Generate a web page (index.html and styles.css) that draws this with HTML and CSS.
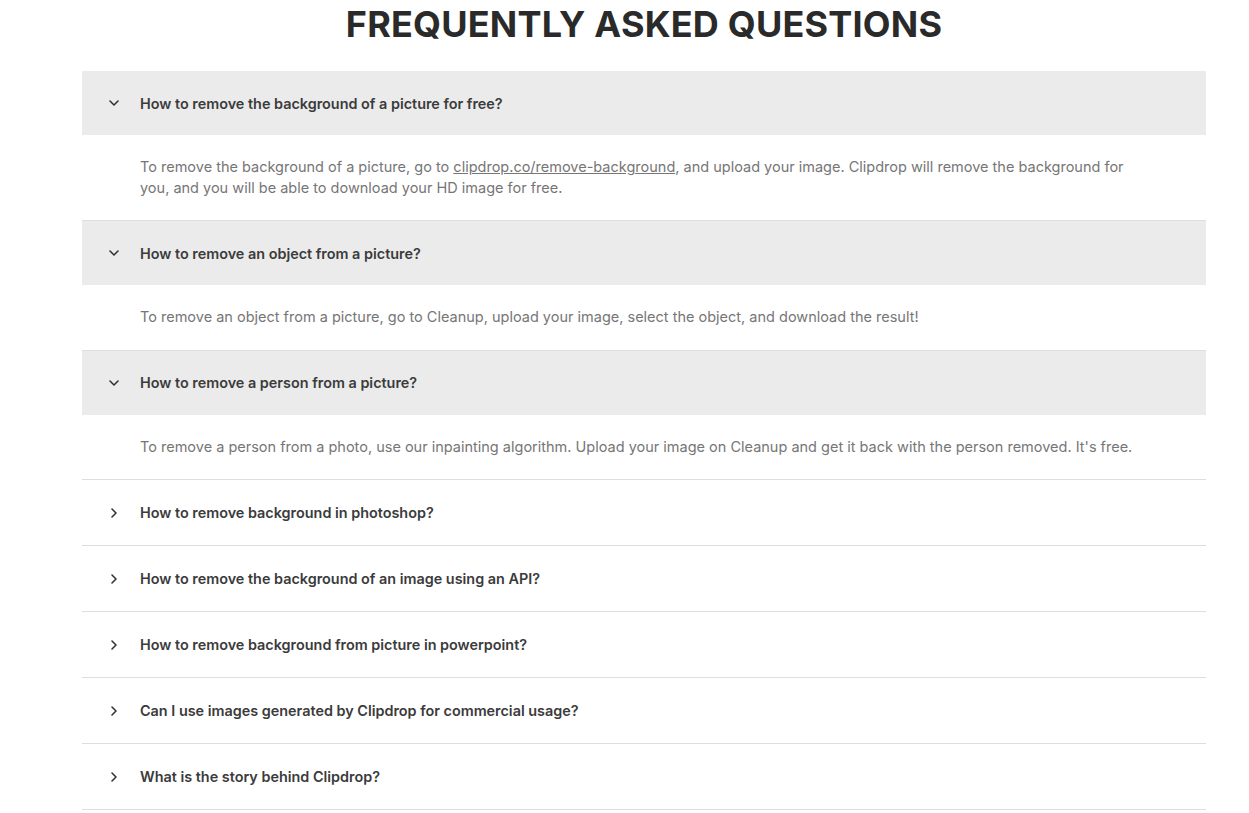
FILE: index.html
```html
<!DOCTYPE html>
<html>
<head>
<meta charset="utf-8">
<link rel="stylesheet" href="styles.css">
</head>
<body>
<section class="faq">
  <h1 class="faq-title">FREQUENTLY ASKED QUESTIONS</h1>
  <div class="faq-list">
    <div class="item open">
      <div class="q"><svg class="chev" viewBox="0 0 16 16"><path d="M4 6l4 4 4-4"/></svg><span>How to remove the background of a picture for free?</span></div>
      <div class="a">To remove the background of a picture, go to <a href="#">clipdrop.co/remove-background</a>, and upload your image. Clipdrop will remove the background for you, and you will be able to download your HD image for free.</div>
    </div>
    <div class="item open">
      <div class="q"><svg class="chev" viewBox="0 0 16 16"><path d="M4 6l4 4 4-4"/></svg><span>How to remove an object from a picture?</span></div>
      <div class="a">To remove an object from a picture, go to Cleanup, upload your image, select the object, and download the result!</div>
    </div>
    <div class="item open">
      <div class="q"><svg class="chev" viewBox="0 0 16 16"><path d="M4 6l4 4 4-4"/></svg><span>How to remove a person from a picture?</span></div>
      <div class="a">To remove a person from a photo, use our inpainting algorithm. Upload your image on Cleanup and get it back with the person removed. It's free.</div>
    </div>
    <div class="item">
      <div class="q"><svg class="chev" viewBox="0 0 16 16"><path d="M6 4l4 4-4 4"/></svg><span>How to remove background in photoshop?</span></div>
    </div>
    <div class="item">
      <div class="q"><svg class="chev" viewBox="0 0 16 16"><path d="M6 4l4 4-4 4"/></svg><span>How to remove the background of an image using an API?</span></div>
    </div>
    <div class="item">
      <div class="q"><svg class="chev" viewBox="0 0 16 16"><path d="M6 4l4 4-4 4"/></svg><span>How to remove background from picture in powerpoint?</span></div>
    </div>
    <div class="item">
      <div class="q"><svg class="chev" viewBox="0 0 16 16"><path d="M6 4l4 4-4 4"/></svg><span>Can I use images generated by Clipdrop for commercial usage?</span></div>
    </div>
    <div class="item">
      <div class="q"><svg class="chev" viewBox="0 0 16 16"><path d="M6 4l4 4-4 4"/></svg><span>What is the story behind Clipdrop?</span></div>
    </div>
  </div>
</section>
</body>
</html>
```
FILE: styles.css
```css
* { box-sizing: border-box; }
html, body { margin: 0; padding: 0; background: #fff; }
body { font-family: Inter, "Noto Sans", sans-serif; }
.faq {
  width: 1124px;
  margin-left: 82px;
}
.faq-title {
  margin: 0;
  height: 71px;
  padding-top: 4px;
  text-align: center;
  font-size: 36px;
  line-height: 40px;
  font-weight: 700;
  color: #2a2a2a;
  letter-spacing: 0.2px;
}
.item { border-bottom: 1px solid #dedede; }
.q {
  display: flex;
  align-items: center;
  height: 65px;
  padding-left: 24px;
  font-size: 14.4px;
  font-weight: 600;
  color: #3b3b3b;
}
.item.open .q { background: #ebebeb; height: 64px; }
.chev {
  width: 16px;
  height: 16px;
  margin-right: 18px;
  fill: none;
  stroke: #333;
  stroke-width: 1.6;
  stroke-linecap: round;
  stroke-linejoin: round;
}
.a {
  padding: 22px 66px 22px 58px;
  font-size: 14.5px;
  line-height: 20.5px;
  color: #767676;
}
.a a { color: #767676; text-decoration: underline; }
```
